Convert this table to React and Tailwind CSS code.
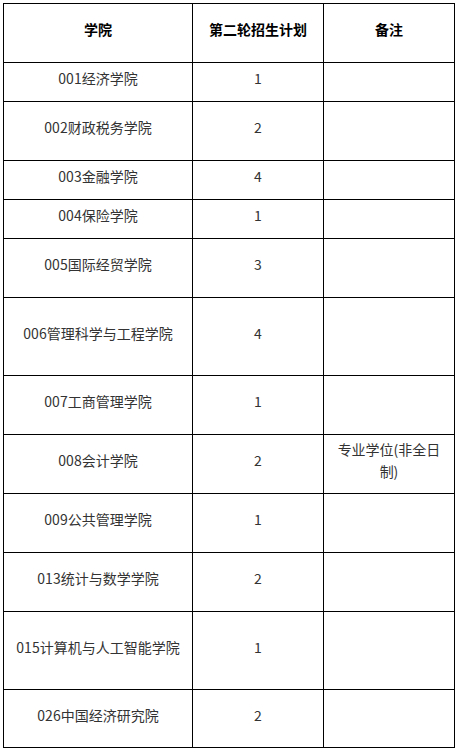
const rows = [
  { name: "001经济学院", plan: "1", h: "h-[39px]" },
  { name: "002财政税务学院", plan: "2", h: "h-[59px]" },
  { name: "003金融学院", plan: "4", h: "h-[39px]" },
  { name: "004保险学院", plan: "1", h: "h-[39px]" },
  { name: "005国际经贸学院", plan: "3", h: "h-[59px]" },
  { name: "006管理科学与工程学院", plan: "4", h: "h-[78px]" },
  { name: "007工商管理学院", plan: "1", h: "h-[59px]" },
  { name: "008会计学院", plan: "2", h: "h-[59px]", note: "专业学位(非全日制)" },
  { name: "009公共管理学院", plan: "1", h: "h-[59px]" },
  { name: "013统计与数学学院", plan: "2", h: "h-[59px]" },
  { name: "015计算机与人工智能学院", plan: "1", h: "h-[78px]" },
  { name: "026中国经济研究院", plan: "2", h: "h-[58px]" },
];

const Cell = ({ className = "", children }) => (
  <div
    className={`flex items-center justify-center border-r border-b border-black px-[8px] pb-[8px] text-center leading-[22px] ${className}`}
  >
    {children}
  </div>
);

const App = () => {
  return (
    <div className="min-h-[752px] bg-white pt-[3px] pl-[3px] font-['Noto_Sans_CJK_SC','Microsoft_YaHei',sans-serif] text-[14px] text-[#333]">
      <div className="grid w-[452px] grid-cols-[189px_131px_131px] border-t border-l border-black">
        {/* header */}
        <Cell className="h-[59px] font-bold text-black">学院</Cell>
        <Cell className="h-[59px] font-bold text-black">第二轮招生计划</Cell>
        <Cell className="h-[59px] font-bold text-black">备注</Cell>

        {rows.map((r) => (
          <div key={r.name} className="contents">
            <Cell className={r.h}>{r.name}</Cell>
            <Cell className={r.h}>{r.plan}</Cell>
            <Cell className={r.h}>{r.note || ""}</Cell>
          </div>
        ))}
      </div>
    </div>
  );
};

export default App;
